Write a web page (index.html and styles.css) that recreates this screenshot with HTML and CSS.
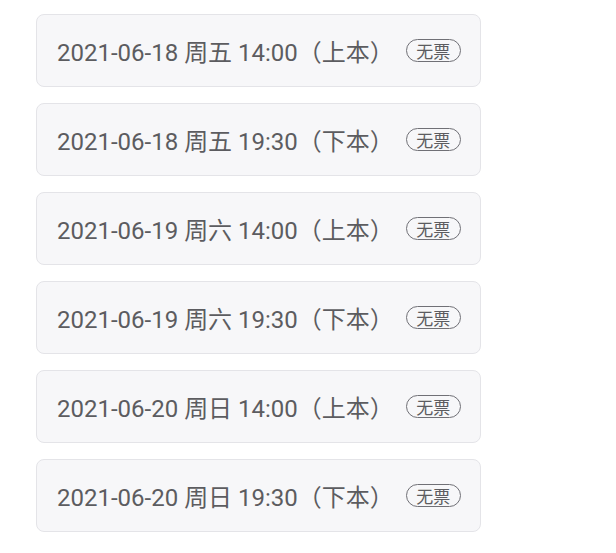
FILE: index.html
```html
<!DOCTYPE html>
<html lang="zh-CN">
<head>
    <meta charset="UTF-8">
    <meta name="viewport" content="width=device-width, initial-scale=1.0">
    <title>场次选择</title>
    <link rel="stylesheet" href="styles.css">
</head>
<body>
    <div class="session-list">
        <div class="session">
            <span class="session-text">2021-06-18 周五 14:00（上本）</span>
            <span class="badge">无票</span>
        </div>
        <div class="session">
            <span class="session-text">2021-06-18 周五 19:30（下本）</span>
            <span class="badge">无票</span>
        </div>
        <div class="session">
            <span class="session-text">2021-06-19 周六 14:00（上本）</span>
            <span class="badge">无票</span>
        </div>
        <div class="session">
            <span class="session-text">2021-06-19 周六 19:30（下本）</span>
            <span class="badge">无票</span>
        </div>
        <div class="session">
            <span class="session-text">2021-06-20 周日 14:00（上本）</span>
            <span class="badge">无票</span>
        </div>
        <div class="session">
            <span class="session-text">2021-06-20 周日 19:30（下本）</span>
            <span class="badge">无票</span>
        </div>
    </div>
</body>
</html>
```

FILE: styles.css
```css
* {
    margin: 0;
    padding: 0;
    box-sizing: border-box;
}

body {
    background-color: #ffffff;
    font-family: Roboto, "Noto Sans CJK SC", sans-serif;
    color: #5c5c60;
}

.session-list {
    display: flex;
    flex-direction: column;
    gap: 16px;
    width: 445px;
    margin: 14px 0 0 36px;
}

.session {
    display: flex;
    align-items: center;
    height: 73px;
    padding-left: 20px;
    background-color: #f7f7f9;
    border: 1px solid #e4e4e8;
    border-radius: 8px;
}

.session-text {
    font-size: 24px;
}

.badge {
    display: inline-flex;
    align-items: center;
    justify-content: center;
    margin-left: 12px;
    width: 55px;
    height: 23px;
    border: 1px solid #707076;
    border-radius: 12px;
    font-size: 17px;
    color: #5c5c60;
}
```
